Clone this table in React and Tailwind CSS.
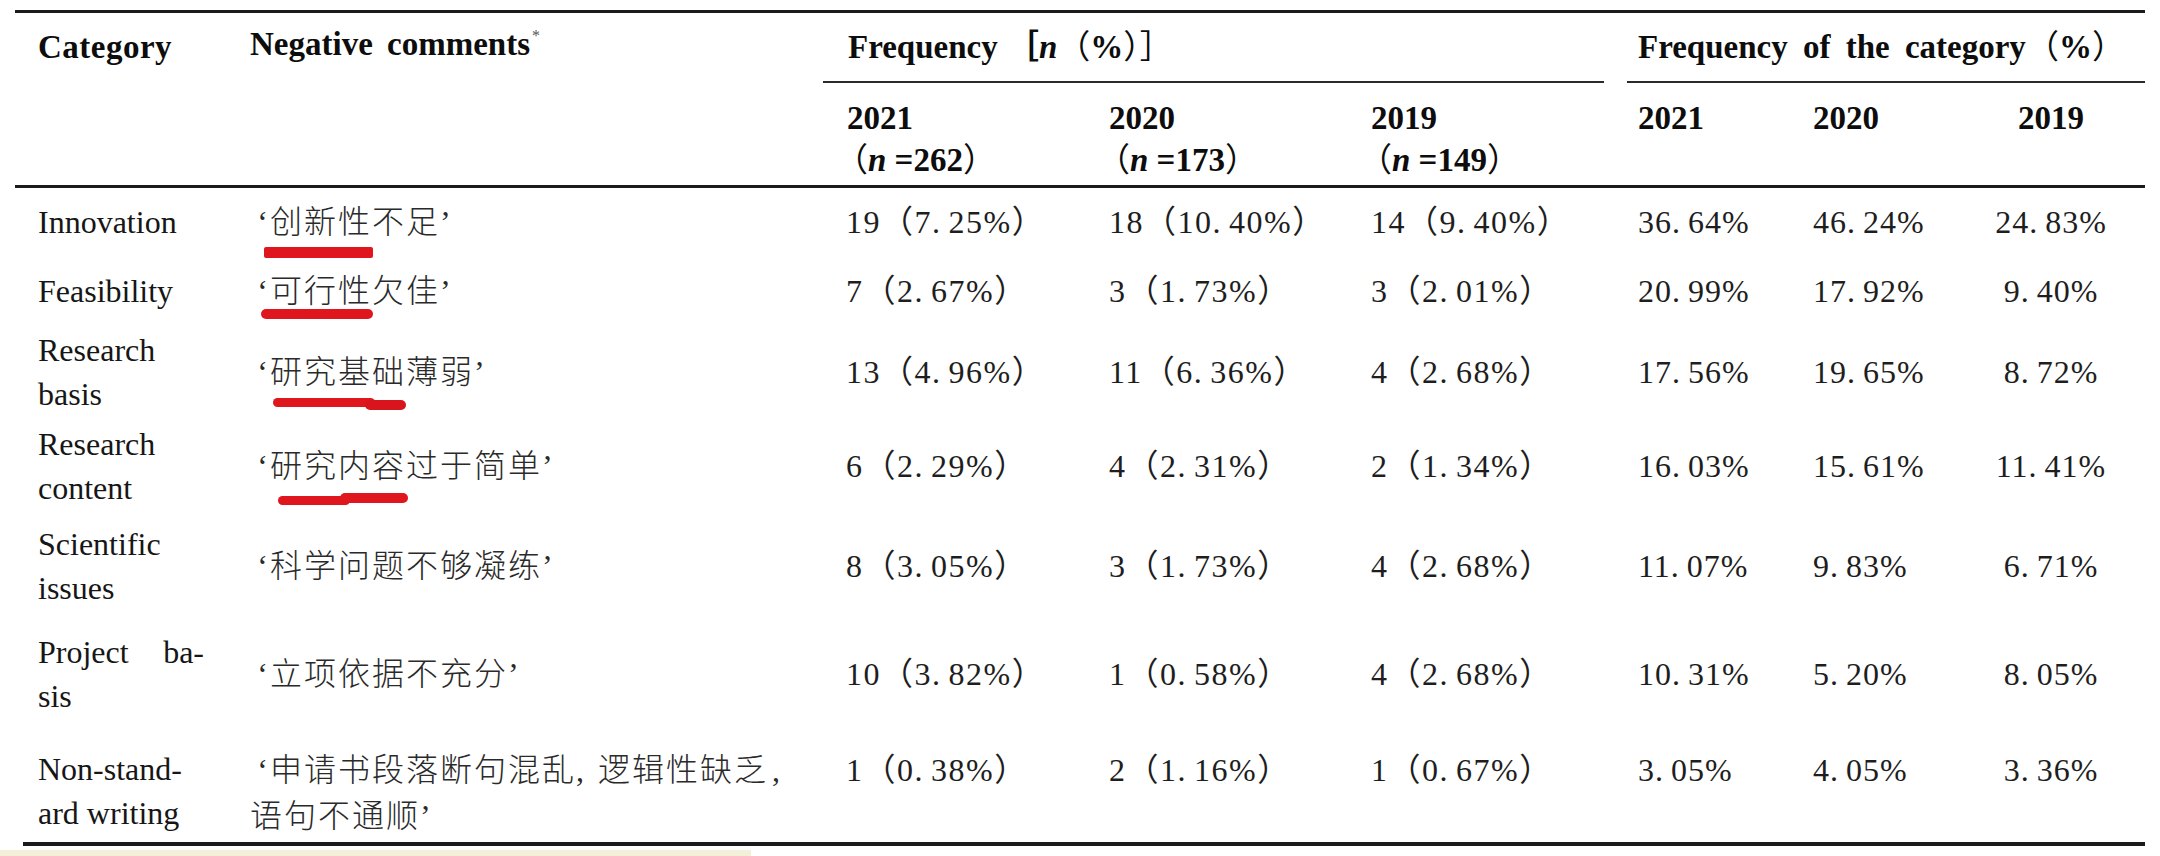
import React from "react";

const FONT = "font-['Liberation_Serif','Noto_Sans_CJK_SC',serif]";

function Dec({ v }) {
  const [a, b] = v.split(".");
  return (
    <>
      {a}.<span className="ml-[7px]">{b}</span>
    </>
  );
}

function Freq({ n, p }) {
  return (
    <span className="whitespace-nowrap">
      {n}（<Dec v={p} />）
    </span>
  );
}

function Quote() {
  return <span className="inline-block w-[20px] text-right">‘</span>;
}

function Mark1() {
  return (
    <svg className="absolute left-[14px] top-[59px]" width="110" height="11" viewBox="0 0 110 11">
      <rect x="0" y="0" width="109" height="11" rx="2" fill="#e0161f" />
    </svg>
  );
}
function Mark2() {
  return (
    <svg className="absolute left-[11px] top-[53px]" width="113" height="10" viewBox="0 0 113 10">
      <rect x="0" y="0" width="112" height="10" rx="5" fill="#e0161f" />
    </svg>
  );
}
function Mark3() {
  return (
    <svg className="absolute left-[23px] top-[71px]" width="134" height="14" viewBox="0 0 134 14">
      <rect x="0" y="1" width="102" height="9" rx="4.5" fill="#e0161f" />
      <rect x="92" y="3" width="41" height="10" rx="5" fill="#d8141d" />
    </svg>
  );
}
function Mark4() {
  return (
    <svg className="absolute left-[28px] top-[75px]" width="131" height="13" viewBox="0 0 131 13">
      <rect x="0" y="3" width="72" height="9" rx="4.5" fill="#e0161f" />
      <rect x="62" y="0" width="68" height="10" rx="5" fill="#e0161f" />
    </svg>
  );
}

const rows = [
  {
    h: "h-[68px] items-center",
    cat: <div>Innovation</div>,
    cn: (
      <div>
        <Quote />创新性不足’
      </div>
    ),
    mark: <Mark1 />,
    f: [["19", "7.25%"], ["18", "10.40%"], ["14", "9.40%"]],
    c: ["36.64%", "46.24%", "24.83%"],
  },
  {
    h: "h-[70px] items-center",
    cat: <div>Feasibility</div>,
    cn: (
      <div>
        <Quote />可行性欠佳’
      </div>
    ),
    mark: <Mark2 />,
    f: [["7", "2.67%"], ["3", "1.73%"], ["3", "2.01%"]],
    c: ["20.99%", "17.92%", "9.40%"],
  },
  {
    h: "h-[92px] items-center",
    cat: (
      <div>
        <div>Research</div>
        <div>basis</div>
      </div>
    ),
    cn: (
      <div>
        <Quote />研究基础薄弱’
      </div>
    ),
    mark: <Mark3 />,
    f: [["13", "4.96%"], ["11", "6.36%"], ["4", "2.68%"]],
    c: ["17.56%", "19.65%", "8.72%"],
  },
  {
    h: "h-[96px] items-center",
    cat: (
      <div>
        <div>Research</div>
        <div>content</div>
      </div>
    ),
    cn: (
      <div>
        <Quote />研究内容过于简单’
      </div>
    ),
    mark: <Mark4 />,
    f: [["6", "2.29%"], ["4", "2.31%"], ["2", "1.34%"]],
    c: ["16.03%", "15.61%", "11.41%"],
  },
  {
    h: "h-[104px] items-center",
    cat: (
      <div>
        <div>Scientific</div>
        <div>issues</div>
      </div>
    ),
    cn: (
      <div>
        <Quote />科学问题不够凝练’
      </div>
    ),
    f: [["8", "3.05%"], ["3", "1.73%"], ["4", "2.68%"]],
    c: ["11.07%", "9.83%", "6.71%"],
  },
  {
    h: "h-[112px] items-center",
    cat: (
      <div>
        <div className="flex w-[166px] justify-between">
          <span>Project</span>
          <span>ba-</span>
        </div>
        <div>sis</div>
      </div>
    ),
    cn: (
      <div>
        <Quote />立项依据不充分’
      </div>
    ),
    f: [["10", "3.82%"], ["1", "0.58%"], ["4", "2.68%"]],
    c: ["10.31%", "5.20%", "8.05%"],
  },
  {
    h: "h-[112px] items-start pt-[17px]",
    cat: (
      <div>
        <div>Non-stand-</div>
        <div>ard writing</div>
      </div>
    ),
    cn: (
      <div>
        <div className="whitespace-nowrap">
          <Quote />申请书段落断句混乱<span className="mr-[12px]">,</span>逻辑性缺乏<span className="ml-[4px]">,</span>
        </div>
        <div>语句不通顺’</div>
      </div>
    ),
    f: [["1", "0.38%"], ["2", "1.16%"], ["1", "0.67%"]],
    c: ["3.05%", "4.05%", "3.36%"],
  },
];

export default function App() {
  return (
    <div className={`relative w-[2160px] h-[856px] overflow-hidden bg-white text-[#161616] ${FONT}`}>
      <div className="ml-[15px] w-[2130px] pt-[10px]">
        <div className="h-[3px] bg-[#1b1b1b]" />

        {/* Header */}
        <div className="flex h-[172px] text-[33px] font-bold leading-[40px] text-[#0d0d0d]">
          <div className="flex h-[68px] w-[235px] items-center pl-[23px] tracking-[0.5px]">Category</div>
          <div className="flex h-[68px] w-[573px] items-center [word-spacing:6px]">
            <span>
              Negative comments
              <span className="relative -top-[14px] ml-[2px] text-[16px] font-normal text-[#555]">*</span>
            </span>
          </div>
          <div className="w-[781px]">
            <div className="flex h-[68px] items-center pl-[25px]">
              <span>
                Frequency ［<i>n</i>
                <span className="font-normal">（</span>%<span className="font-normal">）］</span>
              </span>
            </div>
            <div className="h-[2px] bg-[#2a2a2a]" />
            <div className="flex pt-[14px] leading-[42px]">
              {[
                ["2021", "262", "w-[286px] pl-[24px]"],
                ["2020", "173", "w-[262px]"],
                ["2019", "149", "w-[233px]"],
              ].map(([y, n, cls]) => (
                <div key={y} className={cls}>
                  <div>{y}</div>
                  <div className="whitespace-nowrap">
                    <span className="-ml-[12px] font-normal">（</span>
                    <i>n</i> ={n}
                    <span className="font-normal">）</span>
                  </div>
                </div>
              ))}
            </div>
          </div>
          <div className="w-[23px]" />
          <div className="w-[518px]">
            <div className="flex h-[68px] items-center pl-[11px] [word-spacing:7px]">
              <span className="whitespace-nowrap">
                Frequency of the category<span className="font-normal">（</span>%<span className="font-normal">）</span>
              </span>
            </div>
            <div className="h-[2px] bg-[#2a2a2a]" />
            <div className="flex pt-[14px] leading-[42px]">
              <div className="w-[186px] pl-[11px]">2021</div>
              <div className="w-[177px]">2020</div>
              <div className="w-[155px] pr-[33px] text-center">2019</div>
            </div>
          </div>
        </div>
        <div className="h-[3px] bg-[#1b1b1b]" />

        {/* Body */}
        <div className="text-[32px] leading-[44px]">
          {rows.map((r, i) => (
            <div key={i} className={`flex ${r.h}`}>
              <div className="w-[235px] pl-[23px]">{r.cat}</div>
              <div className="relative w-[596px] self-stretch">
                <div className={`flex h-full ${i === 6 ? "items-start" : "items-center"} font-light tracking-[2px] text-[#2a2a2a] leading-[46px]`}>
                  {r.cn}
                </div>
                {r.mark}
              </div>
              <div className="w-[263px] leading-[46px] tracking-[1.5px] text-[#1e1e1e]">
                <Freq n={r.f[0][0]} p={r.f[0][1]} />
              </div>
              <div className="w-[262px] leading-[46px] tracking-[1.5px] text-[#1e1e1e]">
                <Freq n={r.f[1][0]} p={r.f[1][1]} />
              </div>
              <div className="w-[267px] leading-[46px] tracking-[1.5px] text-[#1e1e1e]">
                <Freq n={r.f[2][0]} p={r.f[2][1]} />
              </div>
              <div className="w-[175px] leading-[46px] tracking-[1px] text-[#1e1e1e]">
                <Dec v={r.c[0]} />
              </div>
              <div className="w-[177px] leading-[46px] tracking-[1px] text-[#1e1e1e]">
                <Dec v={r.c[1]} />
              </div>
              <div className="w-[155px] pr-[33px] text-center leading-[46px] tracking-[1px] text-[#1e1e1e]">
                <Dec v={r.c[2]} />
              </div>
            </div>
          ))}
        </div>

        <div className="ml-[8px] h-[4px] w-[2122px] bg-[#1b1b1b]" />
      </div>
      <div className="mt-[4px] h-[6px] w-[751px] bg-[#f4efd9]" />
    </div>
  );
}
